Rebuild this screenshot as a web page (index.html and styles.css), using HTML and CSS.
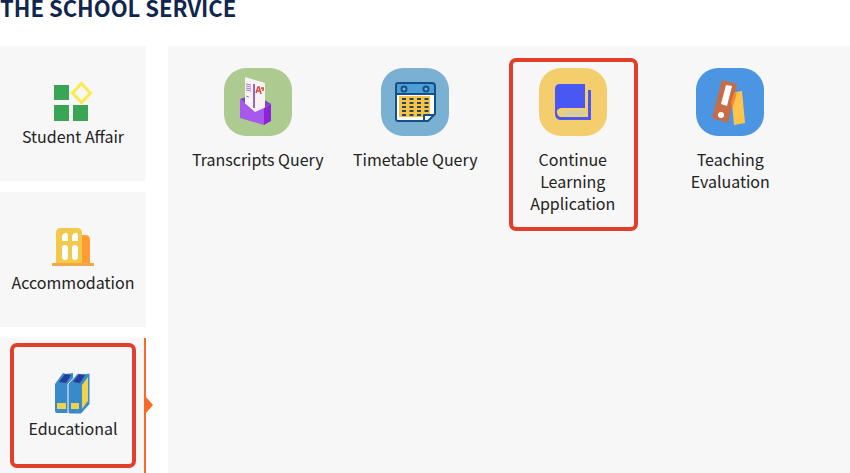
FILE: index.html
```
<!DOCTYPE html>
<html lang="en">

<head>
    <meta charset="UTF-8">
    <meta name="viewport" content="width=device-width, initial-scale=1.0">
    <title>The School Service</title>
    <link rel="stylesheet" href="styles.css">
</head>

<body>
    <header class="header">
        <h1>THE SCHOOL SERVICE</h1>
    </header>
    <div class="content">
        <nav class="sidebar">
            <a class="category" href="#student">
                <svg class="category-icon" viewBox="0 0 44 44">
                    <path fill="#3aa655" d="M3 7h15v15H3zM3 27h15v16H3zM22 27h15v16H22z" />
                    <path fill="none" stroke="#fbea4a" stroke-width="3" d="M30.500 5.500l9 9.500-9 9.500-9-9.500z" />
                </svg>
                <span>Student Affair</span>
            </a>
            <a class="category" href="#accommodation">
                <svg class="category-icon" viewBox="0 0 44 44">
                    <path fill="#ff9c33" d="M28 11h6q5 0 5 5v24H28z" />
                    <path fill="#f3c94b" d="M10 4h16q5 0 5 5v30H5V9q0-5 5-5z" />
                    <path fill="#f6a745" d="M1 39h42v3H1z" />
                    <path fill="#fff" d="M11 17v-4q0-3 3-4t3 4v4zM21 17v-4q0-3 3-4t3 4v4z" />
                    <rect fill="#fff" x="11" y="21" width="6" height="15" rx="3" />
                    <rect fill="#fff" x="21" y="21" width="6" height="15" rx="3" />
                </svg>
                <span>Accommodation</span>
            </a>
            <a class="category active" href="#educational">
                <svg class="category-icon" viewBox="0 0 44 44">
                    <path fill="#388acb" d="M4 14L12 3l3 1 7-1v31l-4 9H6q-2 0-2-2z" />
                    <path fill="#283d98" d="M8 12l6-8 6 1-5 8z" />
                    <path fill="#388acb" d="M17 14L27 3l3 1 9-1v31l-9 10H19q-2 0-2-2z" stroke="#f7f7f7" stroke-width="1" />
                    <path fill="#283d98" d="M22 12l6-8 6 1-5 8z" />
                    <path fill="#efd44b" d="M6 33h9v6H6zM20 33h8v6h-8zM31 15l6-8v24l-6 8z" />
                </svg>
                <span>Educational</span>
                <span class="mark"></span>
            </a>
        </nav>
        <main class="services">
            <a class="service" href="#transcripts">
                <svg class="service-icon green" viewBox="0 0 68 68">
                    <path fill="#7f45c7" d="M16 31l15-5 16 10-16 8z" />
                    <path fill="#f8f3f0" d="M21 9l20 6v28l-10 2-10-9z" />
                    <path stroke="#a779d0" stroke-width="1" d="M22 16l5 1M22 18l5 1M22 20l5 1M22 22l5 1M22 28l3 1" />
                    <path stroke="#9665c5" stroke-width="2" d="M30 16v24" />
                    <path fill="none" stroke="#d94c49" stroke-width="1.500" d="M32 25l2-6h1l2 7M33 23h3M37 20l3 1M39 19v4" />
                    <path fill="#a958ed" d="M16 31l15 13 9-4v17l-24-7z" />
                    <path fill="#8b23d9" d="M40 40l7-4v17l-7 4z" />
                </svg>
                <span>Transcripts Query</span>
            </a>
            <a class="service" href="#timetable">
                <svg class="service-icon sky" viewBox="0 0 68 68">
                    <path fill="#fff" d="M15 16h38v30l-7 7H15z" />
                    <path fill="#4c9ed7" d="M15 15h38v11H15z" />
                    <path fill="#f5c342" d="M18 28h31v18h-7v3H18z" />
                    <path stroke="#27435f" stroke-width="2" stroke-dasharray="4 3.500" d="M21 31h27M21 35h27M21 39h27M21 43h27M21 47h20" />
                    <path fill="none" stroke="#164f87" stroke-width="2" stroke-linejoin="round" d="M17 15h34q3 0 3 3v28l-7 7H17q-2 0-2-2V17q0-2 2-2zM15 26h39M43 53v-6h10" />
                    <circle fill="#73b1df" stroke="#164f87" stroke-width="2" cx="23" cy="21" r="2.500" />
                    <circle fill="#73b1df" stroke="#164f87" stroke-width="2" cx="45" cy="21" r="2.500" />
                </svg>
                <span>Timetable Query</span>
            </a>
            <a class="service" href="#continue">
                <svg class="service-icon yellow" viewBox="0 0 68 68">
                    <path fill="#4957f3" d="M21 16h25v24H22q-5 1-4 5 1 4 4 4h27V22h3v30H21q-5-1-5-6V21q0-5 5-5z" />
                    <rect fill="#ccd0ae" x="24" y="43" width="22" height="4" rx="1" />
                </svg>
                <span>Continue Learning Application</span>
                <span class="mark"></span>
            </a>
            <a class="service" href="#teaching">
                <svg class="service-icon blue" viewBox="0 0 68 68">
                    <path fill="#ffc54b" d="M35 25l11-2 3 32-11 2z" />
                    <path fill="#c66c49" d="M26 12l15 4-9 39-16-5z" />
                    <path fill="#f18a35" d="M38 25h3l-5 16-1-7z" />
                    <path fill="#fff" d="M30 17l6 1-5 20-6-2z" />
                    <circle fill="#fff" cx="25" cy="47" r="3" />
                </svg>
                <span>Teaching Evaluation</span>
            </a>
        </main>
    </div>
</body>

</html>
```
FILE: styles.css
```
* {
    box-sizing: border-box;
}

body {
    margin: 0;
    min-height: 100vh;
    display: flex;
    flex-direction: column;
    background-color: #fff;
    color: #222;
    font-family: "Noto Sans CJK SC", "Noto Sans", sans-serif;
    font-size: 16px;
    line-height: 22px;
}

a {
    color: inherit;
    text-decoration: none;
}

.header {
    height: 46px;
}

.header h1 {
    margin: 0;
    color: #10264c;
    font-size: 22px;
    line-height: 14px;
    font-weight: bold;
}

.content {
    flex: 1;
    display: grid;
    grid-template-columns: 146px 1fr;
    gap: 22px;
}

.sidebar {
    display: flex;
    flex-direction: column;
    gap: 11px;
}

.category {
    position: relative;
    padding: 32px 0 34px;
    display: flex;
    flex-direction: column;
    align-items: center;
    gap: 3px;
    background-color: #f7f7f7;
}

.category-icon {
    width: 44px;
    height: 44px;
}

/* orange bar and arrow of the selected category */
.active::before {
    content: "";
    position: absolute;
    top: 0;
    bottom: 0;
    right: 0;
    width: 2px;
    background-color: #fa6a27;
}

.active::after {
    content: "";
    position: absolute;
    top: 59px;
    right: -7px;
    border: 8px solid transparent;
    border-left: 7px solid #fa6a27;
    border-right: 0;
}

.services {
    padding: 22px 41px 22px 11px;
    display: grid;
    grid-template-columns: repeat(4, 1fr);
    align-items: start;
    background-color: #f7f7f7;
}

.service {
    position: relative;
    padding: 0 12px;
    display: flex;
    flex-direction: column;
    align-items: center;
    gap: 12px;
    text-align: center;
}

.service-icon {
    width: 68px;
    height: 68px;
    border-radius: 22px;
}

.green {
    background-color: #adca91;
}

.sky {
    background-color: #7ab0d2;
}

.yellow {
    background-color: #f4cd6c;
}

.blue {
    background-color: #4b95e3;
}

/* red highlight frame */
.mark {
    position: absolute;
    border: 4px solid #e23f2a;
    border-radius: 7px;
}

.category .mark {
    inset: 5px 10px;
}

.service .mark {
    inset: -10px 14px -17px 15px;
}
```
